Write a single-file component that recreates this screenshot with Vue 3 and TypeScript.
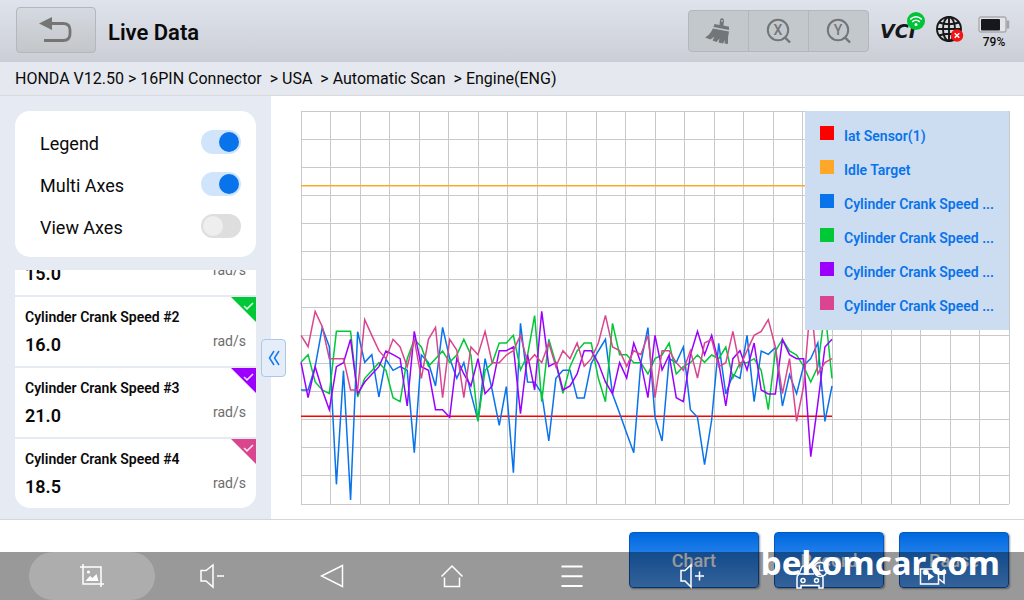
<script setup lang="ts">
import { ref } from 'vue'

interface Trace {
  name: string
  color: string
  levels: number[]
}
interface Reading {
  name: string
  value: string
  unit: string
  color: string
  shown: boolean
}

const crumbs = 'HONDA V12.50 > 16PIN Connector  > USA  > Automatic Scan  > Engine(ENG)'

const switches = ref([
  { id: 'legend', label: 'Legend', on: true },
  { id: 'multi', label: 'Multi Axes', on: true },
  { id: 'view', label: 'View Axes', on: false },
])

const readings = ref<Reading[]>([
  { name: 'Cylinder Crank Speed #1', value: '15.0', unit: 'rad/s', color: '#0873ea', shown: true },
  { name: 'Cylinder Crank Speed #2', value: '16.0', unit: 'rad/s', color: '#00c837', shown: true },
  { name: 'Cylinder Crank Speed #3', value: '21.0', unit: 'rad/s', color: '#9b00ff', shown: true },
  { name: 'Cylinder Crank Speed #4', value: '18.5', unit: 'rad/s', color: '#d9468f', shown: true },
])

const flat = (level: number) => Array<number>(76).fill(level)

const traces: Trace[] = [
  { name: 'Idle Target', color: '#ffa726', levels: flat(-343) },
  { name: 'Iat Sensor(1)', color: '#ff0000', levels: flat(349) },
  {
    name: 'Cylinder Crank Speed #1',
    color: '#0873ea',
    levels: [
      270, 270, 200, 83, 140, 553, 212, 600, 95, 187, 164, 291, 178, 211, 200, 211, 458, 165, 188, 258,
      82, 175, 235, 188, 280, 362, 176, 270, 376, 260, 518, 70, 246, 247, 280, 423, 235, 211, 211, 294,
      294, 190, 153, 118, 282, 340, 400, 458, 188, 83, 352, 423, 176, 188, 141, 329, 352, 494, 360, 130,
      282, 224, 235, 106, 305, 153, 163, 143, 318, 224, 281, 196, 176, 129, 364, 258,
    ],
  },
  {
    name: 'Cylinder Crank Speed #2',
    color: '#00c837',
    levels: [
      187, 164, 246, 270, 281, 94, 94, 94, 291, 235, 212, 188, 211, 293, 305, 176, 118, 141, 199, 176,
      153, 187, 165, 118, 165, 364, 211, 190, 129, 129, 106, 210, 165, 47, 305, 118, 190, 280, 200, 153,
      129, 129, 235, 305, 70, 164, 164, 188, 188, 222, 176, 165, 129, 222, 200, 188, 165, 187, 165, 176,
      141, 234, 188, 188, 176, 211, 329, 153, 118, 153, 165, 199, 246, 200, 30, 235,
    ],
  },
  {
    name: 'Cylinder Crank Speed #3',
    color: '#9b00ff',
    levels: [
      187, 293, 200, 270, 329, 200, 188, 118, 281, 246, 223, 200, 153, 164, 176, 318, 94, 200, 211, 329,
      329, 352, 176, 222, 258, 176, 281, 258, 152, 152, 141, 341, 164, 270, 34, 199, 188, 270, 258, 222,
      152, 152, 190, 246, 281, 188, 234, 129, 188, 293, 106, 210, 165, 293, 305, 165, 94, 164, 106, 188,
      318, 176, 152, 210, 129, 270, 282, 282, 118, 164, 176, 176, 470, 310, 141, 118,
    ],
  },
  {
    name: 'Cylinder Crank Speed #4',
    color: '#d9468f',
    levels: [
      106, 140, 34, 80, 176, 176, 176, 270, 270, 59, 106, 152, 176, 118, 141, 200, 118, 235, 118, 82,
      293, 118, 150, 293, 141, 164, 94, 188, 188, 165, 152, 106, 188, 164, 188, 129, 200, 152, 176, 129,
      199, 176, 129, 46, 141, 152, 199, 152, 164, 106, 293, 152, 152, 188, 211, 152, 234, 129, 118, 200,
      188, 94, 200, 152, 106, 94, 59, 141, 281, 176, 364, 258, 0, 222, 188, 176,
    ],
  },
]

// A hundred samples fill the plot's width; three levels make one unit of its height.
const points = (levels: number[]) =>
  levels.map((v, i) => `${(i * 7.08).toFixed(2)},${(189 + v / 3).toFixed(2)}`).join(' ')

const columns = Array.from({ length: 25 }, (_, i) => i * 29.5)
const rows = Array.from({ length: 15 }, (_, i) => (i * 393) / 14)

const legend = [
  { text: 'Iat Sensor(1)', color: '#ff0000' },
  { text: 'Idle Target', color: '#ffa726' },
  { text: 'Cylinder Crank Speed ...', color: '#0873ea' },
  { text: 'Cylinder Crank Speed ...', color: '#00c837' },
  { text: 'Cylinder Crank Speed ...', color: '#9b00ff' },
  { text: 'Cylinder Crank Speed ...', color: '#d9468f' },
]
</script>

<template>
  <div class="screen">
    <header class="topbar">
      <button class="back" aria-label="Back">
        <svg width="34" height="26" viewBox="0 0 34 26">
          <path d="M11 6.500H24Q31 6.500 31 13V17Q31 23.500 24 23.500H5" fill="none" stroke="#757575" stroke-width="2.800" />
          <path d="M0 6.500L13 0V13Z" fill="#757575" />
        </svg>
      </button>
      <h1>Live Data</h1>
      <div class="tools">
        <button aria-label="Clear">
          <svg width="30" height="30" viewBox="0 0 30 30" fill="#737678">
            <path d="M15.500 9L15.900 4.500Q16.200 2 18.200 2.200T20 5L19.400 9.500L25 10.700V14L9.500 11L10.500 8Z" />
            <circle cx="18" cy="4.800" r="0.900" fill="#c3c8cc" />
            <path d="M8.800 12.500L25 15.500Q23.500 21 24 28L20.500 27.500L20.700 24L19 27.500L14.500 26.500L15.500 22.500L12.500 26L8.500 24.500L10.500 20.500L6.500 23.500L1 21.500Q6.500 18.500 8.800 12.500Z" />
          </svg>
        </button>
        <button v-for="axis in ['X', 'Y']" :key="axis" :aria-label="`Zoom ${axis}`">
          <svg width="30" height="30" viewBox="0 0 30 30">
            <circle cx="14" cy="14" r="10.200" fill="none" stroke="#737678" stroke-width="2" />
            <path d="M20.500 21L26 26.500" stroke="#737678" stroke-width="2.400" />
            <text x="14" y="19" text-anchor="middle" class="axis">{{ axis }}</text>
          </svg>
        </button>
      </div>
      <svg class="vci" width="48" height="36" viewBox="0 0 48 36">
        <text x="0" y="30" class="vci-text">VCI</text>
        <circle cx="36" cy="13" r="9" fill="#00c437" />
        <g fill="none" stroke="#fff" stroke-width="1.600">
          <path d="M30.200 11.300Q36 6.200 41.800 11.300" />
          <path d="M32.200 13.900Q36 10.600 39.800 13.900" />
        </g>
        <circle cx="36" cy="16.500" r="1.500" fill="#fff" />
      </svg>
      <svg class="globe" width="30" height="30" viewBox="0 0 30 30">
        <g fill="none" stroke="#181818" stroke-width="1.900">
          <circle cx="14" cy="14" r="12" />
          <ellipse cx="14" cy="14" rx="6" ry="12" />
          <path d="M14 2V26M2 14H26M4 7.500Q14 11 24 7.500M4 20.500Q14 17 24 20.500" />
        </g>
        <circle cx="22" cy="20.500" r="6.200" fill="#f51414" />
        <path d="M19.700 18.200L24.300 22.800M24.300 18.200L19.700 22.800" stroke="#fff" stroke-width="1.500" />
      </svg>
      <div class="battery">
        <svg width="32" height="18" viewBox="0 0 32 18">
          <rect x="1" y="1" width="27" height="15" rx="2" fill="#e2e4e8" stroke="#a9abb0" stroke-width="1.400" />
          <rect x="3" y="3" width="19" height="11.500" rx="1" fill="#15181c" />
          <rect x="28.700" y="4.500" width="2.500" height="8" fill="#a2a4a8" />
        </svg>
        <span>79%</span>
      </div>
    </header>

    <nav class="crumbs" aria-label="Path">{{ crumbs }}</nav>

    <main>
      <aside>
        <div class="switches">
          <div v-for="s in switches" :key="s.id" class="switch-row">
            <label :for="s.id">{{ s.label }}</label>
            <input :id="s.id" v-model="s.on" type="checkbox" role="switch" />
          </div>
        </div>
        <div class="readings">
          <label v-for="r in readings" :key="r.name" class="reading">
            <span class="name">{{ r.name }}</span>
            <span class="line">
              <strong>{{ r.value }}</strong>
              <span class="unit">{{ r.unit }}</span>
            </span>
            <input v-model="r.shown" type="checkbox" :style="{ background: r.color }" />
            <svg class="tick" width="11" height="8" viewBox="0 0 11 8">
              <path d="M1 4L4 6.800L10 1" fill="none" stroke="#fff" stroke-opacity="0.850" stroke-width="1.600" />
            </svg>
          </label>
        </div>
        <button class="collapse" aria-label="Collapse panel">
          <svg width="12" height="16" viewBox="0 0 12 16" fill="none" stroke="#1279f0" stroke-width="1.500">
            <path d="M6 1L1.500 8L6 15M11 1L6.500 8L11 15" />
          </svg>
        </button>
      </aside>

      <section class="plot">
        <svg class="canvas" viewBox="0 0 708 393" preserveAspectRatio="none">
          <g class="grid">
            <line v-for="x in columns" :key="`c${x}`" :x1="x" :x2="x" y1="0" y2="393" />
            <line v-for="y in rows" :key="`r${y}`" :y1="y" :y2="y" x1="0" x2="708" />
          </g>
          <polyline v-for="t in traces" :key="t.name" class="trace" :points="points(t.levels)" :stroke="t.color" />
        </svg>
        <ul class="legend">
          <li v-for="(l, i) in legend" :key="i">
            <i :style="{ background: l.color }"></i>
            <span>{{ l.text }}</span>
          </li>
        </ul>
      </section>
    </main>

    <footer>
      <button class="action wide">Chart</button>
      <button class="action">Record</button>
      <button class="action">Pause</button>
    </footer>

    <nav class="system" aria-label="System">
      <button class="active" aria-label="Screenshot">
        <svg width="24" height="24" viewBox="0 0 24 24">
          <path d="M3 0V20H24M0 3H21V23" />
          <circle cx="8.500" cy="8" r="1.600" class="solid" />
          <path class="solid" d="M5.500 17L10 12L12.500 14L16.500 10L18.500 17Z" />
        </svg>
      </button>
      <button aria-label="Volume down">
        <svg width="26" height="26" viewBox="0 0 26 26">
          <path d="M2 7.500H7L14 2V24L7 18H2ZM18 13H25" />
        </svg>
      </button>
      <button aria-label="Back">
        <svg width="24" height="24" viewBox="0 0 24 24"><path d="M1.500 12L22.500 1.500V22.500Z" /></svg>
      </button>
      <button aria-label="Home">
        <svg width="24" height="24" viewBox="0 0 24 24"><path d="M1.500 12.500L12 2L22.500 12.500M4.500 13.500V22.500H19.500V13.500" /></svg>
      </button>
      <button aria-label="Menu">
        <svg width="24" height="24" viewBox="0 0 24 24"><path class="thick" d="M1.500 2.500H22.500M1.500 12.300H22.500M1.500 22H22.500" /></svg>
      </button>
      <button aria-label="Volume up">
        <svg width="26" height="26" viewBox="0 0 26 26">
          <path d="M2 7.500H6L12 2V24L6 18H2ZM16 13H25M20.500 8.500V17.500" />
        </svg>
      </button>
      <button aria-label="Vehicle">
        <svg width="34" height="30" viewBox="0 0 34 30">
          <path d="M4 13L6.500 6.500Q7 5 9 5H17M4 13Q2 14 2 17V27H6V24.500H24V27H28V17Q28 15 26.500 14M4 13H19" />
          <circle cx="8" cy="19.500" r="2" />
          <circle cx="21.500" cy="19.500" r="2" />
          <circle cx="25.500" cy="8.500" r="7" />
          <path d="M24.500 4.500V9.500H28.500" />
        </svg>
      </button>
      <button aria-label="Video">
        <svg width="26" height="20" viewBox="0 0 26 20">
          <path d="M1.500 3H19.500V18H1.500ZM20 8L25 4V17L20 13" />
          <path class="solid" d="M9 6.500L15 10.500L9 14.500Z" />
        </svg>
      </button>
    </nav>
    <div class="brand">bekomcar.com</div>
  </div>
</template>

<style>
body {
  background: #fff;
}
</style>

<style scoped>
.screen {
  position: relative;
  display: flex;
  flex-direction: column;
  min-height: 100vh;
  overflow: hidden;
  background: #fff;
  color: #0a0a0a;
  font-family: Roboto, "Liberation Sans", sans-serif;
}
.screen * {
  box-sizing: border-box;
}
button {
  display: flex;
  align-items: center;
  justify-content: center;
  padding: 0;
  border: 0;
  background: none;
  font-family: inherit;
}
input {
  appearance: none;
  margin: 0;
}
.topbar {
  display: flex;
  align-items: center;
  height: 62px;
  padding: 0 14px 0 16px;
  background: linear-gradient(#dfe3ec, #cbced5);
}
.back {
  width: 80px;
  height: 46px;
  margin-bottom: 2px;
  border: 1px solid #b4b7bb;
  border-radius: 4px;
  background: linear-gradient(#d5d9e1, #c3c7c9);
}
h1 {
  flex: 1;
  margin: 2px 0 0 12px;
  font-size: 22px;
  font-weight: 600;
}
.tools {
  display: flex;
  border: 1px solid #b3b7bb;
  border-radius: 4px;
  background: #c3c8cc;
}
.tools button {
  width: 60px;
  height: 40px;
  border-left: 1px solid #b3b7bb;
}
.tools button:first-child {
  width: 59px;
  border-left: 0;
}
.axis {
  fill: #737678;
  font-size: 14px;
  font-weight: 500;
}
.vci {
  align-self: flex-start;
  margin: 8px 5px 0 11px;
}
.vci-text {
  fill: #15171a;
  font-family: "DejaVu Sans", sans-serif;
  font-size: 19px;
  font-weight: 700;
  font-style: italic;
}
.globe {
  align-self: flex-start;
  margin: 15px 13px 0 2px;
}
.battery {
  display: flex;
  flex-direction: column;
  align-items: center;
  gap: 1px;
  padding-top: 2px;
  font-size: 12px;
  line-height: 14px;
  font-weight: 500;
}
.crumbs {
  height: 34px;
  padding-left: 15px;
  border-bottom: 1px solid #d9dadc;
  background: #e5e8ee;
  font-size: 16px;
  line-height: 33px;
  white-space: pre;
}
main {
  display: flex;
  flex: 1;
  border-bottom: 1px solid #d6d7da;
}
aside {
  position: relative;
  display: flex;
  flex-direction: column;
  gap: 13px;
  width: 271px;
  padding: 15px 15px 11px;
  background: #e6ebf3;
}
.switches {
  padding: 10px 15px 10px 25px;
  border-radius: 15px;
  background: #fff;
}
.switch-row {
  display: flex;
  align-items: center;
  justify-content: space-between;
  height: 42px;
  font-size: 18px;
}
.switch-row label {
  padding-top: 2px;
}
.switch-row input {
  width: 40px;
  height: 24px;
  padding: 2px;
  border-radius: 12px;
  background: #dedede;
}
.switch-row input::before {
  content: "";
  display: block;
  width: 20px;
  height: 20px;
  border-radius: 50%;
  background: #eee;
}
.switch-row input:checked {
  background: #d0e5fb;
}
.switch-row input:checked::before {
  margin-left: auto;
  background: #0873ea;
}
.readings {
  display: flex;
  flex: 1 0 238px;
  flex-direction: column;
  justify-content: flex-end;
  gap: 2px;
  height: 238px;
  overflow: hidden;
  border-radius: 0 0 15px 15px;
}
.reading {
  position: relative;
  flex: none;
  height: 69px;
  padding: 10px;
  background: #fff;
}
.name {
  display: block;
  font-size: 14px;
  line-height: 20px;
  font-weight: 600;
}
.line {
  display: flex;
  justify-content: space-between;
  padding-top: 6px;
}
.line strong {
  font-size: 18px;
  line-height: 24px;
  font-weight: 600;
}
.unit {
  color: #6d6d6d;
  font-size: 14px;
  line-height: 16px;
}
.reading input {
  position: absolute;
  top: 0;
  right: 0;
  width: 25px;
  height: 25px;
  clip-path: polygon(0 0, 100% 0, 100% 100%);
}
.tick {
  position: absolute;
  top: 5px;
  right: 2px;
}
.collapse {
  position: absolute;
  top: 243px;
  right: -15px;
  width: 25px;
  height: 38px;
  border: 1px solid #abc8e9;
  border-radius: 4px;
  background: #e5edf8;
}
.plot {
  position: relative;
  display: flex;
  flex: 1;
  min-width: 0;
  padding: 15px 15px 15px 30px;
}
.canvas {
  flex: 1;
  width: 100%;
  height: 393px;
  min-width: 0;
  overflow: visible;
}
.grid line {
  stroke: #c9c9c9;
  stroke-width: 1px;
  shape-rendering: crispEdges;
  vector-effect: non-scaling-stroke;
}
.trace {
  fill: none;
  stroke-width: 1.500px;
  vector-effect: non-scaling-stroke;
}
.legend {
  position: absolute;
  top: 15px;
  right: 15px;
  width: 204px;
  margin: 0;
  padding: 8px 15px 7px;
  background: #ccddf2;
  list-style: none;
}
.legend li {
  display: flex;
  gap: 10px;
  height: 34px;
  padding-top: 7px;
  color: #0873ea;
  font-size: 14px;
  line-height: 20px;
  font-weight: 600;
  white-space: nowrap;
}
.legend i {
  flex: none;
  width: 14px;
  height: 14px;
}
footer {
  display: flex;
  justify-content: flex-end;
  gap: 15px;
  padding: 12px 15px;
}
.action {
  width: 110px;
  height: 56px;
  border: 1px solid #0859bd;
  border-radius: 4px;
  background: linear-gradient(#0068de, #58a4ff);
  box-shadow: 1px 1px 2px #999;
  color: #fff;
  font-size: 18px;
  font-weight: 500;
}
.action.wide {
  width: 130px;
}
.system {
  position: absolute;
  right: 0;
  bottom: 0;
  left: 0;
  display: flex;
  height: 48px;
  padding: 0 32px;
  background: rgba(0, 0, 0, 0.4);
}
.system button {
  flex: 0 0 12.5%;
}
.system .active {
  flex-basis: calc(12.5% + 6px);
  margin: 0 -3px;
  border-radius: 24px;
  background: rgba(255, 255, 255, 0.2);
}
.system path,
.system circle {
  fill: none;
  stroke: #fff;
  stroke-width: 1.500px;
}
.system .thick {
  stroke-width: 2px;
}
.system .solid {
  fill: #fff;
  stroke: none;
}
.brand {
  position: absolute;
  right: 24px;
  bottom: 14px;
  color: #fff;
  font-family: "Noto Sans", "Open Sans", sans-serif;
  font-size: 33px;
  line-height: 46px;
  font-weight: 700;
  pointer-events: none;
}
</style>
